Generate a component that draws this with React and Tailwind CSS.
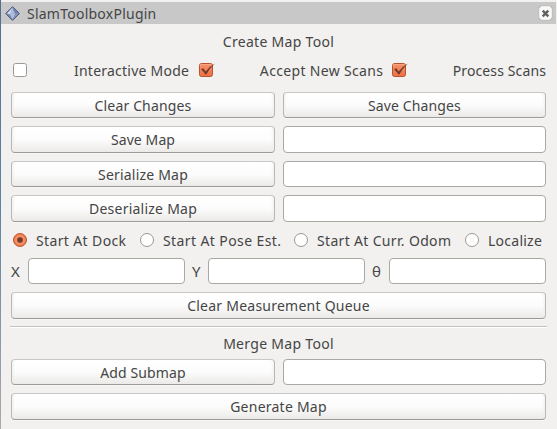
import React from "react";

function Text({ children, className = "" }) {
  return <span className={`block whitespace-nowrap leading-[20px] ${className}`}>{children}</span>;
}

function Button({ children, className = "", textClass = "" }) {
  return (
    <button
      className={`flex items-center justify-center rounded-[4px] border border-[#b9b7b4] border-t-[#c9c7c4] border-b-[#9c9a97] bg-linear-to-b from-white via-[#fcfcfc] to-[#ebeae8] shadow-[inset_3px_0_3px_-2px_#f0efed,inset_-3px_0_3px_-2px_#f0efed,0_1px_0_#f8f7f6] ${className}`}
    >
      <Text className={textClass}>{children}</Text>
    </button>
  );
}

function Input({ className = "" }) {
  return <input className={`block rounded-[4px] border border-[#aaa8a5] bg-white outline-none ${className}`} />;
}

function Check({ checked = false }) {
  return (
    <svg width="17" height="16" viewBox="0 0 17 16" className="-mt-[2px] block shrink-0">
      <defs>
        <linearGradient id="orange" x2="0" y2="1">
          <stop offset="0" stopColor="#f7936c" />
          <stop offset="1" stopColor="#ee6f43" />
        </linearGradient>
      </defs>
      <rect x=".5" y="1.5" width="13" height="13" rx="2" fill={checked ? "url(#orange)" : "#fff"} stroke={checked ? "#b6532f" : "#9b9996"} />
      {checked && (
        <>
          <path d="M1.5 4.5v-2h11" fill="none" stroke="#f8ab8b" strokeWidth=".8" />
          <path d="M2 7.2 4.3 6.2 6.7 9.4Q10 4.8 16 1.6 10.5 6.5 7.3 12.6H6.5Q4.6 9.7 2 7.2Z" fill="#733b2d" />
        </>
      )}
    </svg>
  );
}

function Radio({ checked = false }) {
  return (
    <svg width="15" height="16" viewBox="0 0 15 16" className="block shrink-0">
      <circle cx="7" cy="8" r="6.5" fill={checked ? "#f1784e" : "#fff"} stroke={checked ? "#bd5733" : "#999794"} />
      {checked && (
        <>
          <circle cx="7" cy="8" r="4.2" fill="#ef8055" stroke="#f9ac89" strokeWidth=".8" />
          <circle cx="7" cy="8" r="2.8" fill="#743c2c" />
        </>
      )}
    </svg>
  );
}

function Diamond() {
  return (
    <svg width="16" height="16" viewBox="0 0 16 16" className="mt-px block">
      <path d="M7.5.8 14.3 7.5 7.5 14.3.8 7.5Z" fill="#8999bb" stroke="#35466f" />
      <path d="M7.5 1.6 2 7.5l3.2 1.3Z" fill="#d2daeb" />
      <path d="M7.5 1.6 5.2 8.8l4.8-1.5Z" fill="#acbada" />
      <path d="m7.5 1.6 6 5.9-3.5-.2Z" fill="#6880ad" />
      <path d="m2 7.5 3.2 1.3 2.3 4.7Z" fill="#7387b0" />
      <path d="m5.2 8.8 4.8-1.5-2.5 6.2Z" fill="#b4c0d9" />
    </svg>
  );
}

export default function App() {
  return (
    <div className="flex h-[429px] w-[557px] overflow-hidden bg-[#f2f1ef] font-['Noto_Sans','Open_Sans',sans-serif] text-[14px] text-[#454545]">
      <div className="w-px shrink-0 bg-linear-to-b from-[#526f91] via-[#6184a5] to-[#aaa9af]" />
      <main className="flex w-[556px] flex-col">
        <header className="mt-[2px] flex h-[22px] w-[555px] shrink-0 items-center bg-[#c8c8c8] pl-1">
          <Diamond />
          <Text className="ml-[6px] pt-px tracking-[0.24px]">SlamToolboxPlugin</Text>
          <button className="mr-1 ml-auto flex h-[14px] w-[13px] items-center justify-center rounded-[3px] border border-[#eeeeec] bg-[#f8f8f7] shadow-[0_0_1px_#777]">
            <svg width="9" height="9" viewBox="0 0 9 9">
              <path d="m1.7 1.7 5.6 5.6m0-5.6L1.7 7.3" stroke="#62615f" strokeWidth="2.4" />
            </svg>
          </button>
        </header>
        <div className="flex flex-col pr-[11px] pl-[10px]">
          <div className="mt-2 flex h-5 justify-center"><Text className="tracking-[0.3px]">Create Map Tool</Text></div>
          <div className="mt-[9px] flex h-5 items-center pl-[2px]">
            <Check />
            <Text className="ml-[44px] w-[125px] tracking-[0.23px]">Interactive Mode</Text>
            <Check checked />
            <Text className="ml-[44px] w-[132px] tracking-[0.33px]">Accept New Scans</Text>
            <Check checked />
            <Text className="ml-[44px] tracking-[0.12px]">Process Scans</Text>
          </div>
          <div className="mt-[11px] flex h-[26px] gap-2">
            <Button className="w-[264px]" textClass="pt-px tracking-[0.15px]">Clear Changes</Button>
            <Button className="w-[263px]" textClass="pt-px tracking-[0.12px]">Save Changes</Button>
          </div>
          <div className="mt-2 flex h-[27px] gap-2">
            <Button className="w-[264px]" textClass="tracking-[0.1px]">Save Map</Button>
            <Input className="w-[263px]" />
          </div>
          <div className="mt-2 flex h-[26px] gap-2">
            <Button className="w-[264px]" textClass="pt-px tracking-[0.2px]">Serialize Map</Button>
            <Input className="w-[263px]" />
          </div>
          <div className="mt-2 flex h-[27px] gap-2">
            <Button className="w-[264px]" textClass="tracking-[0.24px]">Deserialize Map</Button>
            <Input className="w-[263px]" />
          </div>
          <div className="mt-2 flex h-5 items-center pl-[2px]">
            <Radio checked /><Text className="ml-2 w-[104px] pt-px tracking-[0.37px]">Start At Dock</Text>
            <Radio /><Text className="ml-2 w-[131px] pt-px tracking-[0.4px]">Start At Pose Est.</Text>
            <Radio /><Text className="ml-2 w-[148px] pt-px tracking-[0.33px]">Start At Curr. Odom</Text>
            <Radio /><Text className="ml-2 pt-px tracking-[0.25px]">Localize</Text>
          </div>
          <div className="mt-2 flex h-[26px] items-center">
            <Text className="w-[17px] text-[15px]">X</Text><Input className="h-full w-[157px]" />
            <Text className="w-[23px] pl-[7px] text-[15px]">Y</Text><Input className="h-full w-[157px]" />
            <Text className="w-[24px] pl-[7px] text-[15px]">θ</Text><Input className="h-full w-[157px]" />
          </div>
          <Button className="mt-2 h-[27px] w-[535px]" textClass="tracking-[0.24px]">Clear Measurement Queue</Button>
          <div className="mt-[7px] -mr-px -ml-px h-[2px] border-t border-[#c4c2bf] bg-white" />
          <div className="mt-[6px] flex h-5 justify-center"><Text className="tracking-[0.3px]">Merge Map Tool</Text></div>
          <div className="mt-[5px] flex h-[26px] gap-2">
            <Button className="w-[264px]" textClass="pt-px tracking-[0.12px]">Add Submap</Button>
            <Input className="w-[263px]" />
          </div>
          <Button className="mt-2 h-[27px] w-[535px]" textClass="tracking-[0.24px]">Generate Map</Button>
        </div>
      </main>
    </div>
  );
}
